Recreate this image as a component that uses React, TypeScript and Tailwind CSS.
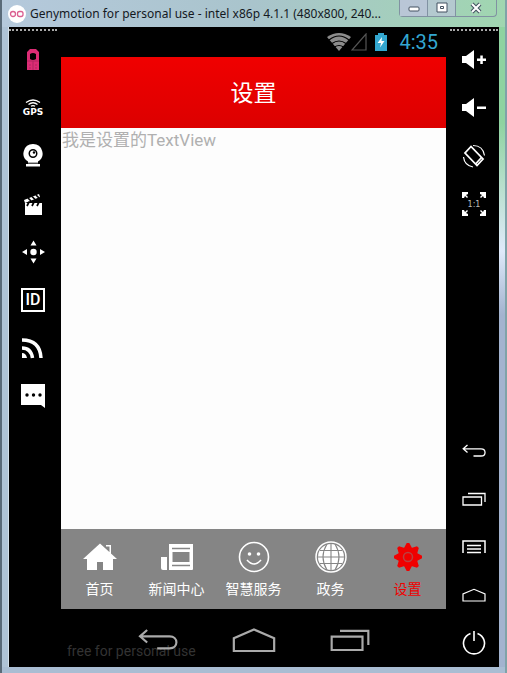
import type { ReactNode } from "react";

function Icon({ children, label, onPhone = false }: { children: ReactNode; label: string; onPhone?: boolean }) {
  return (
    <button
      type="button"
      aria-label={label}
      className={onPhone ? "flex h-12 w-24 items-center justify-center" : "flex h-12 w-12 shrink-0 items-center justify-center text-white"}
    >
      {children}
    </button>
  );
}

const svg = {
  width: 24,
  height: 24,
  viewBox: "0 0 24 24",
  fill: "none",
  stroke: "currentColor",
  strokeWidth: 1.6,
  "aria-hidden": true,
} as const;

const solid = { ...svg, fill: "currentColor", stroke: "none" } as const;

function Back({ className = "h-6 w-6" }: { className?: string }) {
  return (
    <svg {...svg} className={className} viewBox="0 0 24 14" strokeWidth={1.3}>
      <path d="M5.5 1 1.2 4.8l4.3 3.7M1.5 4.8H19c5.4 0 5.4 7.2 0 7.2h-7.500" />
    </svg>
  );
}

function Home({ className = "h-6 w-6" }: { className?: string }) {
  return (
    <svg {...svg} className={className} viewBox="0 0 24 14" strokeWidth={1.2}>
      <path d="M1 13V6l11-4.700L23 6v7z" />
    </svg>
  );
}

function Recents({ className = "h-6 w-6" }: { className?: string }) {
  return (
    <svg {...svg} className={className} viewBox="0 0 24 14" strokeWidth={1.3}>
      <path d="M1 5h18.500v8H1zM6 1.500h17V10" />
    </svg>
  );
}

function LeftTools() {
  return (
    <nav aria-label="Sensors" className="mr-1 w-12 shrink-0">
      <div className="mt-0.5 mb-[5px] border-t-2 border-dotted border-[#a9a9a9]" />
      <Icon label="Battery">
        <svg {...solid} className="text-[#dc2c75]">
          <path fillRule="evenodd" d="M9 1h6l3 3v18H6V4zM9 6v5q3 2 6 0V6q-3-2-6 0" />
          <path d="M6 13h12M12 13v9M8 17h2M14 17h2M8 20h2M14 20h2" stroke="#b02460" strokeWidth={1} />
        </svg>
      </Icon>
      <Icon label="GPS">
        <span className="flex flex-col items-center">
          <svg {...svg} className="h-2 w-4" viewBox="0 0 16 8">
            <path d="M1 3.500q7-5 14 0M3.500 5.500q4.500-3.500 9 0M6 7.300q2-1.500 4 0" strokeWidth={1.3} />
          </svg>
          <span className="font-['DejaVu_Sans',sans-serif] text-[9px] leading-[10px] font-bold">GPS</span>
        </span>
      </Icon>
      <Icon label="Camera">
        <svg {...solid}>
          <path fillRule="evenodd" d="M12 0a9.500 9.500 0 0 1 5 17.600V20h2v2.500H5V20h2v-2.400A9.500 9.500 0 0 1 12 0m0 5a4.500 4.500 0 1 0 0 9 4.500 4.500 0 0 0 0-9" />
          <circle cx="12" cy="9.500" r="3" />
          <circle cx="13" cy="8.500" r="1.200" fill="#000" />
          <path d="M5 19.200h14" stroke="#000" strokeWidth={1} />
        </svg>
      </Icon>
      <Icon label="Capture">
        <svg {...solid}>
          <path d="M4 11h17v12H4zM3 8l15-6 1 3L4 11z" />
          <path d="m7 6 3 3M11 4.500l3 3M15 3l3 3M8 10l-2 4M13 10l-2 4M18 10l-2 4" stroke="#000" strokeWidth={1.7} />
        </svg>
      </Icon>
      <Icon label="Multi-touch">
        <svg {...solid}>
          <circle cx="12.500" cy="12" r="3.200" />
          <path d="m12.500 .5 3 5h-6zM12.500 23.500l-3-5h6zM1 12l5-3v6zM24 12l-5-3v6z" />
        </svg>
      </Icon>
      <Icon label="Identifiers">
        <span className="flex h-6 w-6 items-center justify-center border-2 border-white font-[Roboto,sans-serif] text-[16px] leading-none font-medium">ID</span>
      </Icon>
      <Icon label="Network">
        <svg {...svg} strokeWidth={3.5}>
          <path d="M1 4q18 0 19 18M1 12q9 0 10.500 10" />
          <path d="M1 17q4 0 5 5H1z" fill="currentColor" stroke="none" />
        </svg>
      </Icon>
      <Icon label="Phone">
        <svg {...solid}>
          <path d="M0 0h24v24l-4-3H0z" />
          <g fill="#000">
            <circle cx="6" cy="11" r="1.700" />
            <circle cx="12.500" cy="11" r="1.700" />
            <circle cx="19" cy="11" r="1.700" />
          </g>
        </svg>
      </Icon>
    </nav>
  );
}

function RightTools() {
  return (
    <nav aria-label="Device controls" className="mr-px ml-1 flex w-12 shrink-0 flex-col">
      <div className="mt-0.5 mb-[5px] border-t-2 border-dotted border-[#a9a9a9]" />
      <Icon label="Volume up">
        <svg {...solid}><path d="M0 8h4l8-6v19l-8-6H0zM15 10.500h9V13h-9zM18.300 7.500h2.500V16h-2.500z" /></svg>
      </Icon>
      <Icon label="Volume down">
        <svg {...solid}><path d="M0 8h4l8-6v19l-8-6H0zM15 10.500h9V13h-9z" /></svg>
      </Icon>
      <Icon label="Rotate">
        <svg {...svg}>
          <path d="M9 2.500 3 9l12 12.500 6-6.500z" strokeWidth={1.8} />
          <path d="m13.500 20 6-6.500" strokeWidth={1.8} />
          <path d="M11 1.500q10 0 11.500 10M1.500 13q1 8.500 9.500 10" strokeWidth={1.2} />
        </svg>
      </Icon>
      <Icon label="Pixel perfect">
        <svg {...solid}>
          <path d="M0 0h6v2L4 3l2 2-1 1-2-2-1 2H0zM24 0v6h-2l-1-2-2 2-1-1 2-2-2-1V0zM0 24v-6h2l1 2 2-2 1 1-2 2 2 1v2zM24 24h-6v-2l2-1-2-2 1-1 2 2 1-2h2z" />
          <text x="12" y="15" textAnchor="middle" fontFamily="DejaVu Sans, sans-serif" fontSize="8" fill="#bbb">1:1</text>
        </svg>
      </Icon>
      <div className="mt-auto">
        <Icon label="Back"><Back /></Icon>
        <Icon label="Recent apps"><Recents /></Icon>
        <Icon label="Menu">
          <svg {...svg} viewBox="0 0 24 14"><path d="M1 13V1h22v12M5 5.500h14M5 9h14M5 12.500h14" strokeWidth={1.5} /></svg>
        </Icon>
        <Icon label="Home"><Home /></Icon>
        <Icon label="Power">
          <svg {...svg}><path d="M8.500 2.500a10.500 10.500 0 1 0 7 0M12 0v10" /></svg>
        </Icon>
      </div>
    </nav>
  );
}

function StatusBar() {
  return (
    <div className="flex h-[30px] shrink-0 items-center justify-end pr-2 text-[#33a7d0]">
      <svg {...solid} className="h-[18px] w-6 text-[#8c8c8c]" viewBox="0 0 24 18">
        <path d="M0 4Q12-4 24 4L12 18z" />
        <path d="M2 7Q12-1 22 7M5 10.500q7-5 14 0M7.500 14q4.500-3 9 0" fill="none" stroke="#000" strokeWidth={1.2} />
      </svg>
      <svg {...svg} className="h-[18px] w-4 text-[#555]" viewBox="0 0 16 18"><path d="M15 1v16H1z" strokeWidth={1.2} /></svg>
      <svg {...solid} className="mr-3 ml-2 h-[18px] w-3" viewBox="0 0 12 18">
        <path d="M3 0h6v2h3v16H0V2h3z" />
        <path d="M7 4 2.500 10H6l-1 4.500L9.500 8H6.500z" fill="#fff" />
      </svg>
      <span className="font-[Roboto,sans-serif] text-[20px] leading-6">4:35</span>
    </div>
  );
}

const tabs: { name: string; icon: ReactNode }[] = [
  {
    name: "首页",
    icon: (
      <svg {...solid} className="h-8 w-[34px]" viewBox="-1 0 34 32">
        <path d="M16 2.500 33 18h-4v11H19v-8h-6v8H3V18h-4zM22 4h5v9l-1.500-1V5.500H22z" />
      </svg>
    ),
  },
  {
    name: "新闻中心",
    icon: (
      <svg {...solid} className="h-8 w-8" viewBox="0 0 32 32">
        <path d="M8 3h24v25q0 1-1 1H8zM0 16h6v13H2q-2 0-2-2z" />
        <path d="M11 7.500h18M11 24.500h18" fill="none" stroke="#858585" strokeWidth={1.3} />
        <path d="M11.500 11h17v10h-17z" fill="#858585" />
      </svg>
    ),
  },
  {
    name: "智慧服务",
    icon: (
      <svg {...svg} className="h-8 w-8" viewBox="0 0 32 32">
        <circle cx="16" cy="16" r="14.500" />
        <path d="M9 19q7 8 14 0" />
        <circle cx="11.500" cy="13" r="1.800" fill="currentColor" stroke="none" />
        <circle cx="20.500" cy="13" r="1.800" fill="currentColor" stroke="none" />
      </svg>
    ),
  },
  {
    name: "政务",
    icon: (
      <svg {...solid} className="h-8 w-8" viewBox="0 0 32 32">
        <circle cx="16" cy="16" r="15" fill="none" stroke="currentColor" strokeWidth={1.5} />
        <circle cx="16" cy="16" r="13" />
        <path d="M16 3v26M3 16h26M5 9.500h22M5 22.500h22M12 3Q4 16 12 29M20 3q8 13 0 26" fill="none" stroke="#858585" strokeWidth={1.1} />
      </svg>
    ),
  },
  {
    name: "设置",
    icon: (
      <svg {...solid} className="h-8 w-8" viewBox="0 0 32 32">
        {[0, 45, 90, 135, 180, 225, 270, 315].map((angle) => (
          <path key={angle} d="M11.500 8 14.700 2h2.600l3.200 6z" transform={`rotate(${angle} 16 16)`} />
        ))}
        <circle cx="16" cy="16" r="9" />
        <circle cx="16" cy="16" r="4.500" fill="none" stroke="#b94141" strokeWidth={1.5} />
      </svg>
    ),
  },
];

function Phone() {
  return (
    <main className="flex min-w-0 flex-1 flex-col bg-black font-['Liberation_Sans','Noto_Sans_CJK_SC',sans-serif]">
      <StatusBar />
      <header className="flex h-[71px] shrink-0 items-center justify-center bg-linear-to-b from-[#f00000] to-[#dc0000] text-white">
        <h1 className="text-[23px] leading-8">设置</h1>
      </header>
      <section className="flex-1 bg-[#fdfdfd] px-px">
        <p className="font-[Roboto,'Noto_Sans_CJK_SC',sans-serif] text-[17px] leading-6 text-[#b0b0b0]">我是设置的TextView</p>
      </section>
      <nav aria-label="首页导航" className="grid h-20 shrink-0 grid-cols-5 bg-[#858585]">
        {tabs.map((tab) => (
          <button
            key={tab.name}
            type="button"
            className={`flex flex-col items-center pt-3 text-[14px] leading-5 ${tab.name === "设置" ? "text-[#f00000]" : "text-white"}`}
          >
            {tab.icon}
            <span className="mt-1.5">{tab.name}</span>
          </button>
        ))}
      </nav>
      <div className="relative flex h-[58px] shrink-0 items-end justify-center pb-[3px] text-[#aaaaaa]">
        <span className="absolute bottom-1.5 left-1.5 font-[Roboto,sans-serif] text-[14px] leading-5 text-[#333333]">free for personal use</span>
        <Icon label="Back" onPhone><Back className="relative h-6 w-10" /></Icon>
        <Icon label="Home" onPhone><Home className="h-[26px] w-11" /></Icon>
        <Icon label="Recent apps" onPhone><Recents className="h-6 w-10" /></Icon>
      </div>
    </main>
  );
}

function TitleBar() {
  return (
    <div className="flex h-[27px] shrink-0 bg-linear-to-r from-[#b5c9dc] via-[#a9c4cc] to-[#a0d6b0] pr-2 pl-1.5">
      <div className="flex min-w-0 flex-1 items-center gap-1">
        <svg {...svg} className="h-[18px] w-[18px] shrink-0 text-[#db5f91]" viewBox="0 0 18 18">
          <circle cx="9" cy="9" r="9" fill="#fff" stroke="none" />
          <circle cx="5" cy="9" r="2.500" strokeWidth={1.3} />
          <rect x="9.500" y="6.500" width="5.500" height="5" rx="2" strokeWidth={1.3} />
        </svg>
        <span className="min-w-0 flex-1 overflow-hidden font-['Noto_Sans',sans-serif] text-[12px] leading-6 whitespace-nowrap text-[#14191f]">Genymotion for personal use - intel x86p 4.1.1 (480x800, 240...</span>
      </div>
      <div className="flex h-[17px] shrink-0 rounded-b border border-t-0 border-[#8192a2] text-[#435160]">
        <button type="button" aria-label="Minimize" className="flex w-7 items-center justify-center border-r border-[#8192a2] bg-[#b9c6d6]">
          <svg {...svg} className="h-3 w-3" viewBox="0 0 12 12"><rect x="1" y="5" width="10" height="4" rx="1" fill="#fff" strokeWidth={1} /></svg>
        </button>
        <button type="button" aria-label="Maximize" className="flex w-7 items-center justify-center border-r border-[#8192a2] bg-[#b4c9cf]">
          <svg {...svg} className="h-3 w-3" viewBox="0 0 12 12"><path d="M1 1h10v9H1zM4.500 4.500h3v2h-3z" fill="#fff" strokeWidth={1} /></svg>
        </button>
        <button type="button" aria-label="Close" className="flex w-10 items-center justify-center">
          <svg {...svg} className="h-3 w-3" viewBox="0 0 12 12"><path d="m2 2 8 8M10 2l-8 8" strokeWidth={4} /><path d="m2 2 8 8M10 2l-8 8" stroke="#fff" strokeWidth={2} /></svg>
        </button>
      </div>
    </div>
  );
}

export default function App() {
  return (
    <div className="flex min-h-screen flex-col border-x-2 border-l-[#596a78] border-r-[#7fa3a8] bg-[#a9bdd3]">
      <TitleBar />
      <div className="flex flex-1">
        <div className="w-[7px] shrink-0 border-r border-[#d3e0ea] bg-[#aec3d6]" />
        <div className="flex min-w-0 flex-1 bg-black">
          <LeftTools />
          <Phone />
          <RightTools />
        </div>
        <div className="w-1.5 shrink-0 bg-linear-to-b from-[#8fd3a0] from-15% via-[#dfeafa] via-35% to-[#a3b3cf] to-45%" />
      </div>
      <div className="h-1.5 shrink-0" />
    </div>
  );
}
